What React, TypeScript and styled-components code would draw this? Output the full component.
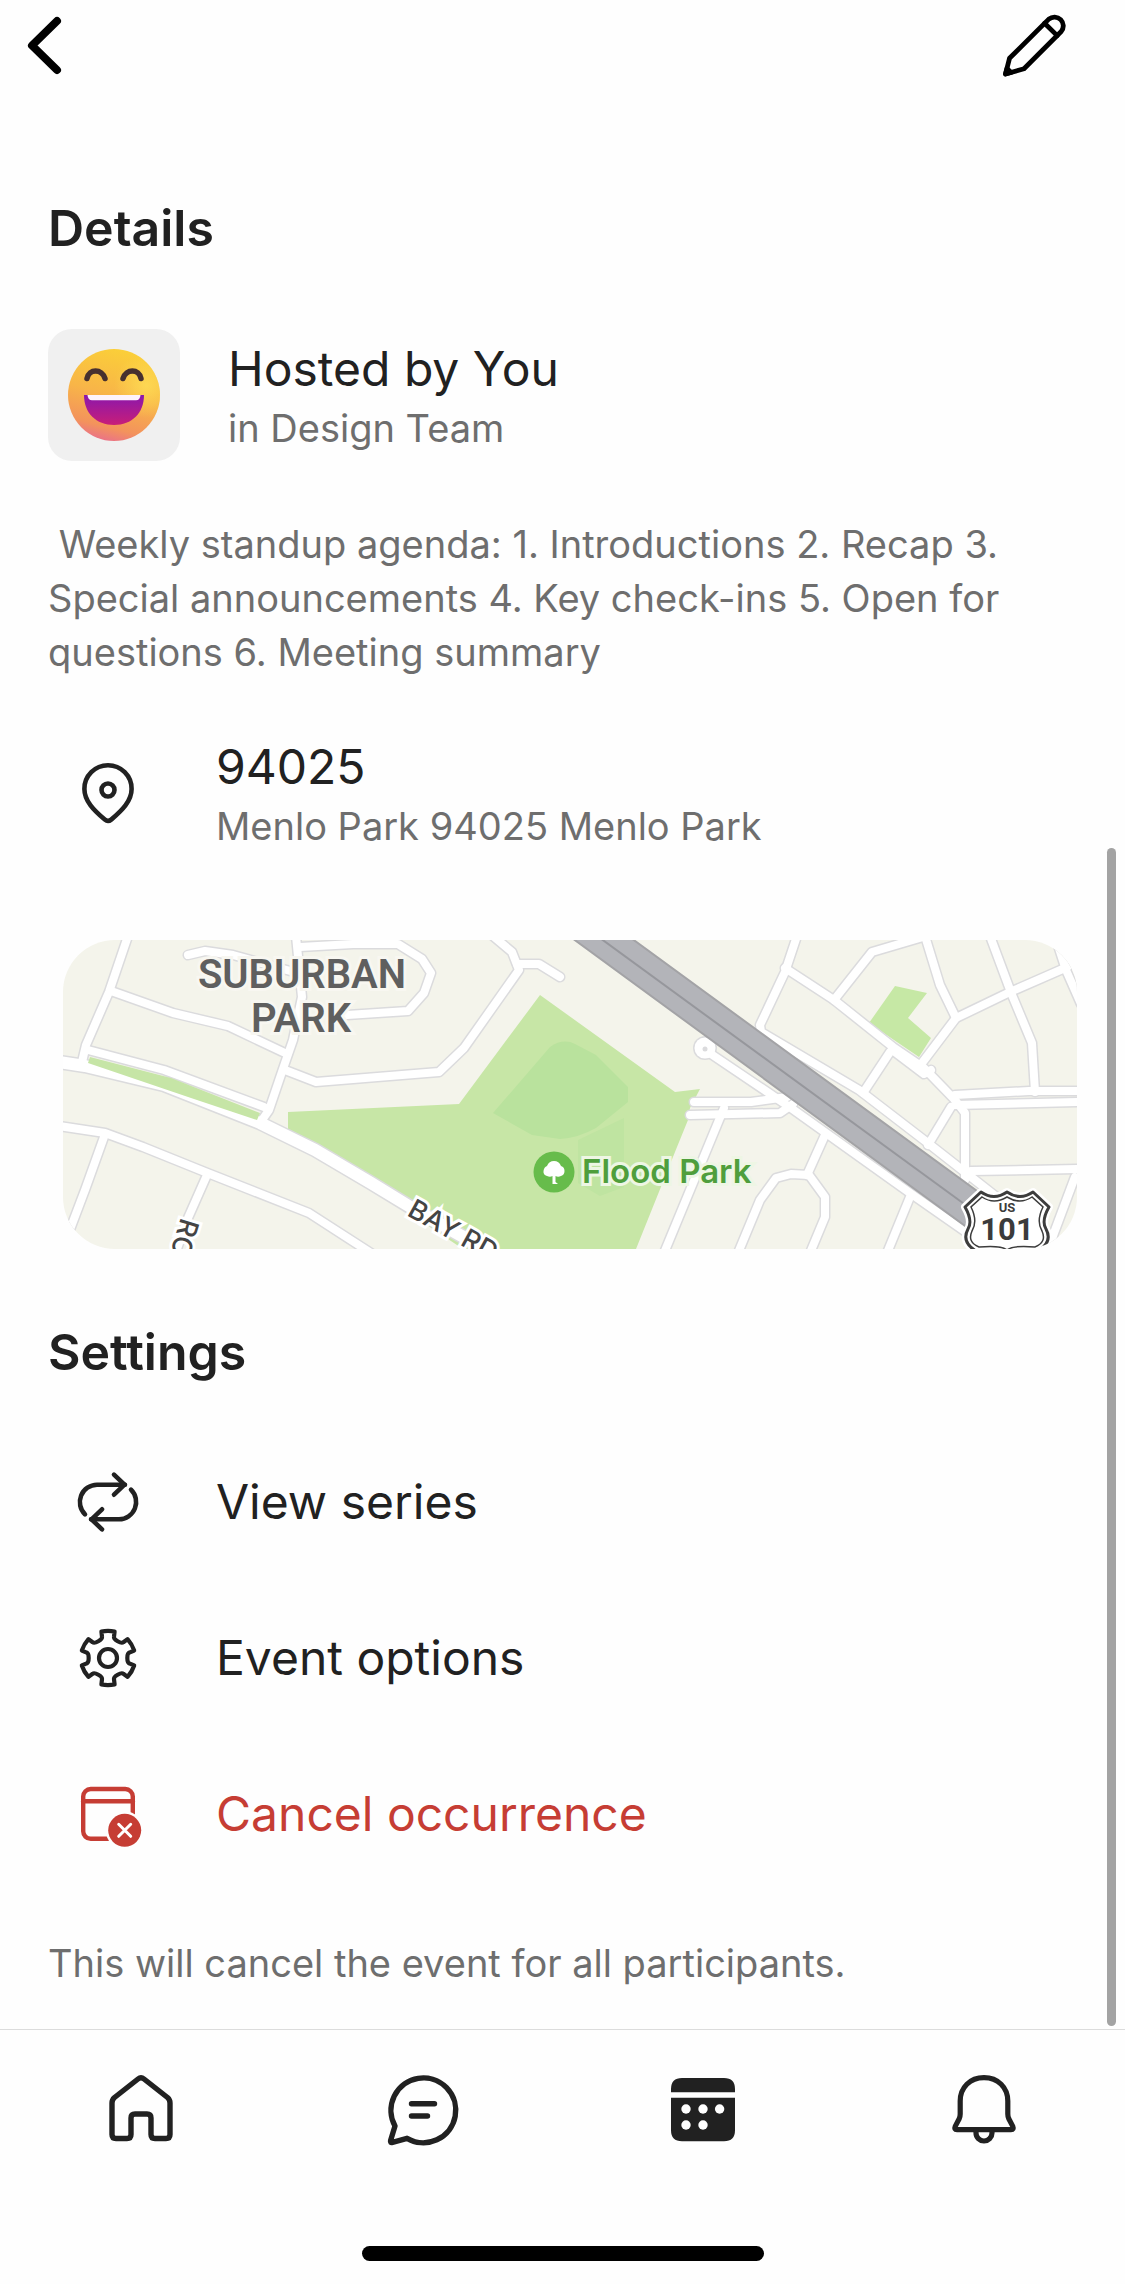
import { FC, ReactNode } from 'react';
import styled, { createGlobalStyle } from 'styled-components';

// ----------------------------------------------------------------------------

const INK = '#212121';
const MUTED = '#6e6e6e';
const DANGER = '#c63d34';

const GlobalStyle = createGlobalStyle`
  * {
    box-sizing: border-box;
  }

  body {
    margin: 0;
    background: #fefefe;
    color: ${INK};
    font-family: Inter, 'Liberation Sans', sans-serif;
  }

  h2,
  p {
    margin: 0;
  }
`;

// ----------------------------------------------------------------------------
// Icons
// ----------------------------------------------------------------------------

interface IconProps {
  children: ReactNode;
  weight?: number;
}

const IconSvg = styled.svg`
  display: block;
  flex-shrink: 0;
  width: 72px;
  height: 72px;
  overflow: visible;
`;

const Icon: FC<IconProps> = ({ children, weight = 4.8 }) => (
  <IconSvg
    viewBox="0 0 72 72"
    fill="none"
    stroke="currentColor"
    strokeWidth={weight}
    strokeLinecap="round"
    strokeLinejoin="round"
    aria-hidden="true"
  >
    {children}
  </IconSvg>
);

const BackIcon = () => (
  <Icon weight={8}>
    <path d="M48 12 L23 36.5 L48 61" />
  </Icon>
);

const PencilIcon = () => (
  <Icon>
    <path d="M49.8 10.1 A8.8 8.8 0 0 1 62.2 22.5 L25 59.8 L6.5 65 L10.5 49.3 Z" />
    <path d="M45.6 14.2 L58.2 26.6" />
    <path d="M6.5 65 L8 59.5 L12 63.5 Z" fill="currentColor" />
  </Icon>
);

const PinIcon = () => (
  <Icon weight={4.6}>
    <path d="M36 8.3 A23.6 23.6 0 0 0 12.4 32 C12.4 44 22 53.5 32.8 62.6 Q36 65.2 39.2 62.6 C50 53.5 59.6 44 59.6 32 A23.6 23.6 0 0 0 36 8.3 Z" />
    <circle cx="36" cy="33" r="6.5" />
  </Icon>
);

const RepeatIcon = () => (
  <Icon weight={4.6}>
    <path d="M13 48.3 A17.3 17.3 0 0 1 25 18.7 H53" />
    <path d="M42 8.7 L52.5 18.7 L42 28.7" />
    <path d="M59 23.7 A17.3 17.3 0 0 1 47 53.3 H19" />
    <path d="M30 43.3 L19.5 53.3 L30 63.3" />
  </Icon>
);

// One tooth of the gear around the origin, repeated every 60 degrees
const TOOTH = [
  [-6, -21.2],
  [-6.6, -26.4],
  [0, -27.8],
  [6.6, -26.4],
  [6, -21.2],
  [5.4, -18.4],
  [-5.4, -18.4],
];

const turn = ([x, y]: number[], step: number) => {
  const a = (step * Math.PI) / 3;
  const px = 36 + x * Math.cos(a) - y * Math.sin(a);
  const py = 36 + x * Math.sin(a) + y * Math.cos(a);
  return `${px.toFixed(2)} ${py.toFixed(2)}`;
};

const gearPath =
  [0, 1, 2, 3, 4, 5]
    .map((i) => {
      const [a, b, top, c, d, e, f] = TOOTH;
      return [
        i === 0 ? `M${turn(a, 0)}` : '',
        `L${turn(b, i)}`,
        `Q${turn(top, i)} ${turn(c, i)}`,
        `L${turn(d, i)}`,
        `C${turn(e, i)} ${turn(f, i + 1)} ${turn(a, i + 1)}`,
      ].join(' ');
    })
    .join(' ') + 'Z';

const GearIcon = () => (
  <Icon weight={4.2}>
    <path d={gearPath} />
    <circle cx="36" cy="36" r="9" />
  </Icon>
);

const CalendarCancelIcon = () => (
  <Icon weight={4.4}>
    <rect x="11.2" y="11" width="49.6" height="49.8" rx="7.5" />
    <path d="M11.2 23.3 H60.8" />
    <circle cx="52.7" cy="52.3" r="19" fill="#fefefe" stroke="none" />
    <circle cx="52.7" cy="52.3" r="16.5" fill="currentColor" stroke="none" />
    <path d="M46.7 46.3 L58.7 58.3 M58.7 46.3 L46.7 58.3" stroke="#fff" strokeWidth="3" />
  </Icon>
);

const HomeIcon = () => (
  <Icon weight={5.4}>
    <path d="M33 7 L9.5 25.5 Q7 27.7 7 31 V62.5 Q7 66.5 11 66.5 H22 Q26 66.5 26 62.5 V46 Q26 42 30 42 H42 Q46 42 46 46 V62.5 Q46 66.5 50 66.5 H61 Q65 66.5 65 62.5 V31 Q65 27.7 62.5 25.5 L39 7 Q36 4.6 33 7 Z" />
  </Icon>
);

const ChatIcon = () => (
  <Icon weight={5.4}>
    <path d="M9 54 A32.4 32.4 0 1 1 21 66.3 L6.5 70.4 Q4 71 4.6 68.5 Z" />
    <path d="M25.5 31.7 H48.5 M25.5 44 H41.5" />
  </Icon>
);

const CalendarIcon = () => (
  <Icon>
    <path
      d="M4 20.3 V17 Q4 6 15 6 H57 Q68 6 68 17 V20.3 Z M4 25.7 H68 V58.3 Q68 69.3 57 69.3 H15 Q4 69.3 4 58.3 Z"
      fill="currentColor"
      stroke="none"
    />
    {[
      [19, 37],
      [36, 37],
      [52.6, 37],
      [19, 53],
      [36, 53],
    ].map(([x, y]) => (
      <circle key={`${x}-${y}`} cx={x} cy={y} r="4.7" fill="#fff" stroke="none" />
    ))}
  </Icon>
);

const BellIcon = () => (
  <Icon weight={5.2}>
    <path d="M36 5.6 C22 5.6 12.2 15.5 12.2 29 V42 Q12.2 44.5 11.2 46.8 L7.2 54.4 Q5.8 57.7 9 57.7 H63 Q66.2 57.7 64.8 54.4 L60.8 46.8 Q59.8 44.5 59.8 42 V29 C59.8 15.5 50 5.6 36 5.6 Z" />
    <path d="M28 58.5 V61 a8 8 0 0 0 16 0 V58.5" />
  </Icon>
);

const Emoji = () => (
  <svg width="92" height="92" viewBox="0 0 92 92" role="img" aria-label="Grinning face">
    <defs>
      <linearGradient id="face" x1="0.65" y1="0" x2="0.4" y2="1">
        <stop offset="0" stopColor="#fbd038" />
        <stop offset="0.5" stopColor="#f8b548" />
        <stop offset="0.85" stopColor="#f3935c" />
        <stop offset="1" stopColor="#ea7288" />
      </linearGradient>
      <radialGradient id="shine" cx="0.85" cy="0.4" r="0.35">
        <stop offset="0" stopColor="#ffe25a" stopOpacity="0.7" />
        <stop offset="1" stopColor="#ffe25a" stopOpacity="0" />
      </radialGradient>
      <linearGradient id="mouth" x1="0" y1="0" x2="0" y2="1">
        <stop offset="0" stopColor="#8a17ad" />
        <stop offset="1" stopColor="#c81e78" />
      </linearGradient>
    </defs>
    <circle cx="46" cy="46" r="46" fill="url(#face)" />
    <circle cx="46" cy="46" r="46" fill="url(#shine)" />
    <g fill="none" stroke="#47302f" strokeWidth="5.5" strokeLinecap="round">
      <path d="M19 29.500 C21 19.5 34 19.5 37 29.500" />
      <path d="M55 29.500 C58 19.5 71 19.5 73 29.500" />
    </g>
    <path d="M16 46 H76 C76 64 64 76 46 76 C28 76 16 64 16 46 Z" fill="url(#mouth)" />
    <path d="M19.5 46 H72.5 Q72 51.3 68 51.3 H24 Q20 51.3 19.5 46 Z" fill="#fdf3fb" />
  </svg>
);

// ----------------------------------------------------------------------------
// Map
// ----------------------------------------------------------------------------

const MINOR_ROADS = [
  'M65 -4 L46 52 L23 105 L19 122',
  'M48 51 L110 73 L165 86 L222 113',
  'M25 110 L101 130 L201 167',
  'M-4 186 L42 193 L80 207 L142 232 L246 273 L308 313',
  'M41 197 L22 250 L3 300',
  'M144 235 L125 278 L110 320',
  'M233 -4 L239 57 L230 100 L222 123 L206 170 L197 183',
  'M237 7 L290 4 L335 4 L359 19 L368 33 L361 53 L345 71 L284 75',
  'M125 15 L142 11 L170 15 L238 34',
  'M222 130 L253 142 L376 132 L401 108 L456 30 L449 12 L430 -4',
  'M454 24 H476 L497 37',
  'M734 -4 L722 32 L697 85 L698 92 L796 150 L861 200 L940 262',
  'M722 28 L771 60 L830 107 L861 128 L892 160',
  'M832 112 L861 134 L868 130',
  'M771 60 L809 12 L860 -3',
  'M862 -4 L877 45 L893 78',
  'M859 123 L893 78 L947 52 L1002 28 L1018 19',
  'M927 -4 L949 55 L969 103 L972 152',
  'M992 -4 L1003 30 L1018 64',
  'M892 155 L966 151 L1018 151',
  'M892 165 L1018 162',
  'M892 160 L902 173 V240',
  'M888 167 L865 205',
  'M827 112 L800 153',
  'M908 231 L1018 229',
  'M1012 237 L991 293 L984 313',
  'M645 112 L728 168 L847 253 L920 304',
  'M631 162 H688 L724 157',
  'M627 175 L717 173 L730 164',
  'M661 168 L601 313',
  'M762 195 L744 235',
  'M675 313 L697 260 L713 238 L728 234 L746 235 L762 257 V277 L747 313',
  'M847 257 L824 313',
];

const BAY_ROAD = 'M-4 122 L22 126 L101 145 L197 183 L252 210 L308 243 L349 268 L459 330';
const SHIELD =
  'M918 252 Q931 261 944 252 Q957 261 970 252 L986 267 Q978 281 983 289 Q990 302 975 311 L944 316 L913 311 Q898 302 905 289 Q910 281 902 267 Z';

const MapFrame = styled.figure`
  margin: 87px 0 0 15px;
  overflow: hidden;
  border-radius: 52px;

  svg {
    display: block;
    width: 100%;
    height: auto;
  }
`;

const AreaLabel = styled.text`
  font: 600 40px Roboto, sans-serif;
  fill: #5f5f5f;
  stroke: #f8f7f1;
  stroke-width: 6px;
  paint-order: stroke;
  text-anchor: middle;
`;

const StreetLabel = styled.text`
  font: 500 27px Inter, sans-serif;
  fill: #444;
  stroke: #fff;
  stroke-width: 6px;
  paint-order: stroke;
`;

const ParkLabel = styled.text`
  font: 600 33px Inter, sans-serif;
  fill: #4f9e3c;
  stroke: #eef6e4;
  stroke-width: 6px;
  paint-order: stroke;
`;

const ShieldLabel = styled.text<{ $size: number }>`
  font: 700 ${({ $size }) => $size}px Roboto, sans-serif;
  fill: #3b3b3b;
  text-anchor: middle;
`;

const EventMap = () => (
  <MapFrame>
    <svg viewBox="0 0 1014 309" role="img" aria-label="Map of Menlo Park">
      <rect width="1014" height="309" fill="#f4f4eb" />

      <path
        d="M225 172 L396 164 L477 55 L612 152 L637 149 L627 168 L625 180 L614 207 L573 309 H400 L225 193 Z"
        fill="#c7e6a6"
      />
      <path
        d="M430 173 L487 107 Q500 98 512 104 L533 115 L565 147 V162 L533 188 Q515 198 497 199 L469 195 Z"
        fill="#b9e29d"
      />
      <path d="M515 200 L561 178 V247 L537 256 L515 243 Z" fill="#bfe4a1" />
      <path d="M832 46 L864 53 L845 78 L868 98 L856 117 L806 83 Z" fill="#c6e8a5" />

      <g fill="none" strokeLinejoin="round" strokeLinecap="round">
        <g stroke="#dbdbdd" strokeWidth="11">
          {MINOR_ROADS.map((d) => (
            <path key={d} d={d} />
          ))}
        </g>
        <circle cx="642" cy="108" r="12" fill="#dbdbdd" />
        <path d={BAY_ROAD} stroke="#dbdbdd" strokeWidth="15" />
        <g stroke="#fff" strokeWidth="8">
          {MINOR_ROADS.map((d) => (
            <path key={d} d={d} />
          ))}
        </g>
        <circle cx="642" cy="108" r="10.5" fill="#fff" />
        <circle cx="642" cy="109" r="2.5" fill="#dbdbdd" />
        <path d={BAY_ROAD} stroke="#fff" strokeWidth="12" />
      </g>
      <path d="M27 117 L108 138 L197 173 L194 180 L128 158 L25 123 Z" fill="#c6e5a6" />

      <path
        d="M509 -2 L568 -2 L940 270 L920 299 Z"
        fill="#b3b4b9"
        stroke="#a3a3a6"
        strokeWidth="2"
      />
      <path d="M537 -2 L930 285" stroke="#96979c" strokeWidth="2" />

      <path d={SHIELD} fill="#fff" stroke="#fff" strokeWidth="8" strokeLinejoin="round" />
      <path d={SHIELD} fill="#fff" stroke="#3d3d3d" strokeWidth="3" strokeLinejoin="round" />
      <path
        d="M919 257 Q931 265 944 257 Q957 265 969 257 L980 267 Q973 281 979 291 Q984 302 972 307 Q950 305 944 310 Q938 305 916 307 Q904 302 909 291 Q915 281 908 267 Z"
        fill="none"
        stroke="#3d3d3d"
        strokeWidth="1.5"
      />
      <ShieldLabel $size={13} x="944" y="272">
        US
      </ShieldLabel>
      <ShieldLabel $size={31} x="944" y="300">
        101
      </ShieldLabel>

      <AreaLabel x="239" y="48">
        SUBURBAN
      </AreaLabel>
      <AreaLabel x="238" y="92">
        PARK
      </AreaLabel>

      <StreetLabel transform="translate(343 275) rotate(29)">BAY RD</StreetLabel>
      <StreetLabel transform="translate(118 277) rotate(107)">RO</StreetLabel>

      <circle cx="491" cy="232" r="20.5" fill="#67bc4b" />
      <path
        d="M489.5 244 V236 Q487 237.500 484 236 Q480 235 480.500 231 Q481 227 484 226 Q486 221 491 221 Q496 221 498 226 Q501.500 227 501.500 231 Q501.500 235 498 236 Q495 237.500 492.500 236 V242 L495 244 H487 Z"
        fill="#fff"
      />
      <ParkLabel x="519" y="243">
        Flood Park
      </ParkLabel>
    </svg>
  </MapFrame>
);

// ----------------------------------------------------------------------------
// Layout
// ----------------------------------------------------------------------------

const Page = styled.div`
  display: flex;
  flex-direction: column;
  min-height: 100vh;
`;

const ScrollArea = styled.div`
  position: relative;
  flex: 1;
`;

const ScrollThumb = styled.div`
  position: absolute;
  top: 848px;
  right: 9px;
  bottom: 3px;
  width: 9px;
  border-radius: 5px;
  background: #a3a3a3;
`;

const Header = styled.header`
  display: flex;
  justify-content: space-between;
  padding: 9px 54px 9px 9px;
`;

const IconButton = styled.button`
  padding: 0;
  border: 0;
  background: none;
  color: #000;
  cursor: pointer;
`;

const Content = styled.main`
  padding: 108px 48px 39px;
`;

const SectionTitle = styled.h2`
  font-size: 50px;
  font-weight: 600;
  line-height: 60px;
`;

const Title = styled.span`
  font-size: 48px;
  line-height: 60px;
`;

const Muted = styled.p`
  color: ${MUTED};
  font-size: 38px;
  line-height: 54px;
`;

const TextStack = styled.div`
  display: flex;
  flex-direction: column;
  gap: 2px;
  padding-top: 4px;
`;

const HostRow = styled.div`
  display: flex;
  align-items: center;
  gap: 48px;
  margin-top: 71px;
`;

const Avatar = styled.div`
  display: flex;
  align-items: center;
  justify-content: center;
  width: 132px;
  height: 132px;
  border-radius: 24px;
  background: #f0f0f0;
`;

const Description = styled(Muted)`
  margin-top: 56px;
  white-space: pre-wrap;
`;

const LocationRow = styled.div`
  display: flex;
  align-items: center;
  gap: 72px;
  margin-top: 54px;
  padding-left: 24px;
`;

const SettingsTitle = styled(SectionTitle)`
  margin-top: 73px;
`;

const SettingsList = styled.div`
  display: flex;
  flex-direction: column;
  gap: 84px;
  margin: 84px 0 86px;
`;

const SettingsButton = styled.button<{ $danger?: boolean }>`
  display: flex;
  align-items: center;
  gap: 72px;
  padding: 0 0 0 24px;
  border: 0;
  background: none;
  color: ${({ $danger }) => ($danger ? DANGER : INK)};
  font-family: inherit;
  text-align: left;
  cursor: pointer;
`;

const TabBar = styled.footer`
  padding: 42px 0 24px;
  border-top: 1px solid #dcdcdc;
`;

const Tabs = styled.nav`
  display: grid;
  grid-template-columns: repeat(4, 1fr);
  justify-items: center;
`;

const Tab = styled.a`
  color: ${INK};
`;

const HomeIndicator = styled.div`
  width: 402px;
  max-width: 60%;
  height: 15px;
  margin: 102px auto 0;
  border-radius: 8px;
  background: #000;
`;

// ----------------------------------------------------------------------------

const settings = [
  { label: 'View series', icon: <RepeatIcon /> },
  { label: 'Event options', icon: <GearIcon /> },
  { label: 'Cancel occurrence', icon: <CalendarCancelIcon />, danger: true },
];

const tabs = [
  { label: 'Home', href: '#home', icon: <HomeIcon /> },
  { label: 'Chat', href: '#chat', icon: <ChatIcon /> },
  { label: 'Calendar', href: '#calendar', icon: <CalendarIcon /> },
  { label: 'Notifications', href: '#notifications', icon: <BellIcon /> },
];

const App: FC = () => (
  <Page>
    <GlobalStyle />
    <ScrollArea>
      <Header>
        <IconButton aria-label="Back">
          <BackIcon />
        </IconButton>
        <IconButton aria-label="Edit">
          <PencilIcon />
        </IconButton>
      </Header>

      <Content>
        <SectionTitle>Details</SectionTitle>
        <HostRow>
          <Avatar>
            <Emoji />
          </Avatar>
          <TextStack>
            <Title>Hosted by You</Title>
            <Muted>in Design Team</Muted>
          </TextStack>
        </HostRow>
        <Description>
          {' Weekly standup agenda: 1. Introductions 2. Recap 3. Special announcements 4. Key check-ins 5. Open for questions 6. Meeting summary'}
        </Description>
        <LocationRow>
          <PinIcon />
          <TextStack>
            <Title>94025</Title>
            <Muted>Menlo Park 94025 Menlo Park</Muted>
          </TextStack>
        </LocationRow>
        <EventMap />

        <SettingsTitle>Settings</SettingsTitle>
        <SettingsList>
          {settings.map(({ label, icon, danger }) => (
            <SettingsButton key={label} $danger={danger}>
              {icon}
              <Title>{label}</Title>
            </SettingsButton>
          ))}
        </SettingsList>
        <Muted>This will cancel the event for all participants.</Muted>
      </Content>
      <ScrollThumb />
    </ScrollArea>

    <TabBar>
      <Tabs>
        {tabs.map(({ label, href, icon }) => (
          <Tab key={label} href={href} aria-label={label}>
            {icon}
          </Tab>
        ))}
      </Tabs>
      <HomeIndicator />
    </TabBar>
  </Page>
);

export default App;
